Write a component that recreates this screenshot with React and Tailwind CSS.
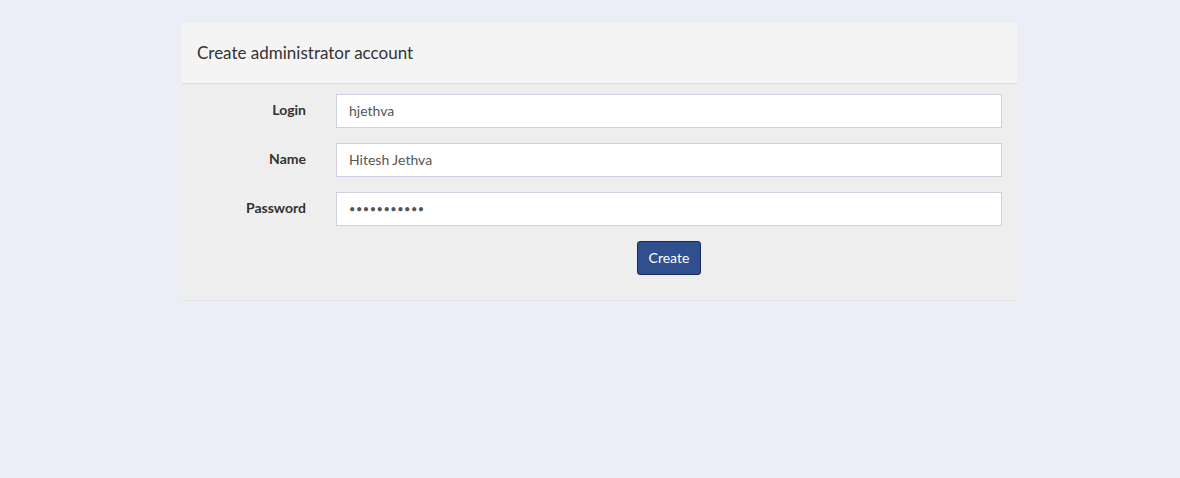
export default function App() {
  const fields = [
    { label: "Login", value: "hjethva" },
    { label: "Name", value: "Hitesh Jethva" },
    { label: "Password", value: "•••••••••••", secret: true },
  ];

  return (
    <div
      className="min-h-[478px] w-full bg-[#ebeef6] pt-[23px]"
      style={{ fontFamily: "Lato, 'Noto Sans', sans-serif" }}
    >
      <div className="ml-[182px] w-[835px]">
        {/* Header */}
        <div className="h-[61px] bg-[#f4f4f4] border-b border-[#dddddd] px-[15px] pb-[2px] flex items-center">
          <h1 className="text-[17px] text-[#333333] leading-none">
            Create administrator account
          </h1>
        </div>

        {/* Form */}
        <form
          className="bg-[#eeeeee] border-b border-[#e2e4ea] pt-[10px] pb-[25px] pr-[15px]"
          onSubmit={(e) => e.preventDefault()}
        >
          <div className="flex flex-col gap-[15px]">
            {fields.map((f) => (
              <div key={f.label} className="flex items-center">
                <label className="w-[124px] text-right text-[14px] font-bold text-[#333333] pb-[3px]">
                  {f.label}
                </label>
                <input
                  type="text"
                  readOnly={f.secret}
                  defaultValue={f.value}
                  className={`ml-[30px] flex-1 h-[34px] bg-white border border-[#cfcfe0] px-[12px] text-[#555555] outline-none pb-[2px] ${
                    f.secret ? "text-[11px] tracking-[0.5px]" : "text-[14px]"
                  }`}
                />
              </div>
            ))}
          </div>
          <div className="flex pl-[154px] mt-[15px]">
            <div className="flex-1 flex justify-center">
              <button
                type="submit"
                className="h-[34px] w-[64px] bg-[#2f4f8f] border border-[#1c2d55] rounded-[3px] text-white text-[14px] pb-[2px]"
              >
                Create
              </button>
            </div>
          </div>
        </form>
      </div>
    </div>
  );
}
